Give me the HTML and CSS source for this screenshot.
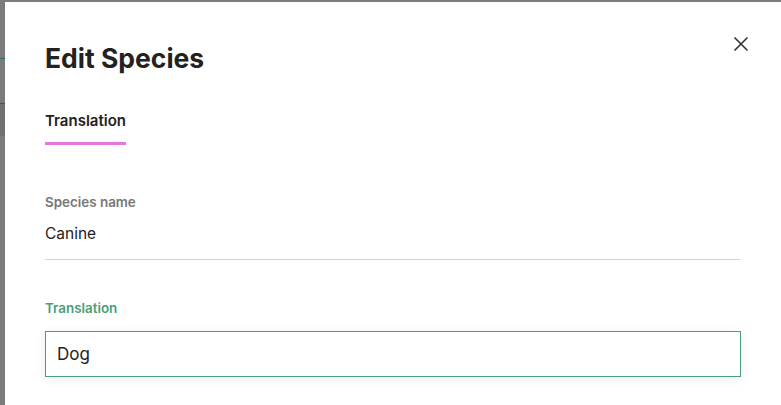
FILE: index.html
```html
<!DOCTYPE html>
<html>
<head>
<meta charset="utf-8">
<link rel="stylesheet" href="styles.css">
</head>
<body>
<div class="backdrop">
  <div class="strip">
    <div class="l1"></div>
    <div class="l2"></div>
    <div class="l3"></div>
  </div>
  <div class="modal">
    <div class="head">
      <h1 class="title">Edit Species</h1>
      <button class="close" aria-label="Close">
        <svg width="16" height="16" viewBox="0 0 16 16"><path d="M1.5 1.5L14.5 14.5M14.5 1.5L1.5 14.5" stroke="#333" stroke-width="1.6" fill="none"/></svg>
      </button>
    </div>
    <div class="tabs">
      <div class="tab active">Translation</div>
    </div>
    <div class="field">
      <div class="label">Species name</div>
      <div class="value">Canine</div>
    </div>
    <div class="field2">
      <div class="label green">Translation</div>
      <div class="input">Dog</div>
    </div>
  </div>
</div>
</body>
</html>
```
FILE: styles.css
```css
* { box-sizing: border-box; }
html, body { margin: 0; padding: 0; }
body {
  width: 781px; height: 405px; overflow: hidden;
  font-family: "Inter", "Noto Sans", sans-serif;
  background: #7b7b7b;
}
.backdrop { display: flex; height: 405px; padding-top: 2px; }
.strip { width: 5px; flex: none; }
.l1 { height: 1px; background: #2f6e55; margin-top: 56px; }
.l2 { height: 1px; background: #33604e; margin-top: 44px; }
.l3 { height: 32px; background: #707070; }
.modal { flex: 1; background: #fff; padding: 0 40px; }
.head { display: flex; justify-content: space-between; align-items: flex-start; padding-top: 40px; }
.title { margin: 0; font-size: 26.5px; font-weight: 700; color: #222; line-height: 32px; letter-spacing: 0; }
.close { border: 0; background: none; padding: 0; margin: -6px -8px 0 0; width: 16px; height: 16px; cursor: pointer; }
.close svg { display: block; }
.tabs { display: flex; margin-top: 38px; }
.tab { font-size: 15px; font-weight: 600; color: #222; padding-bottom: 12px; border-bottom: 3px solid #e078e0; line-height: 18px; }
.field { margin-top: 49px; border-bottom: 1px solid #d3d3d3; padding-bottom: 16px; margin-right: 1px; }
.label { font-size: 13.4px; font-weight: 600; color: #777; line-height: 16px; }
.label.green { color: #4a9e79; }
.value { margin-top: 15px; font-size: 15.5px; color: #222; line-height: 18px; font-weight: 400; }
.field2 { margin-top: 40px; }
.input {
  margin-top: 15px; height: 46px; border: 1px solid #4a9e79;
  padding: 0 11px; font-size: 17px; color: #222; line-height: 44px;
  box-shadow: 0 2px 10px rgba(0,0,0,0.08);
}
```
